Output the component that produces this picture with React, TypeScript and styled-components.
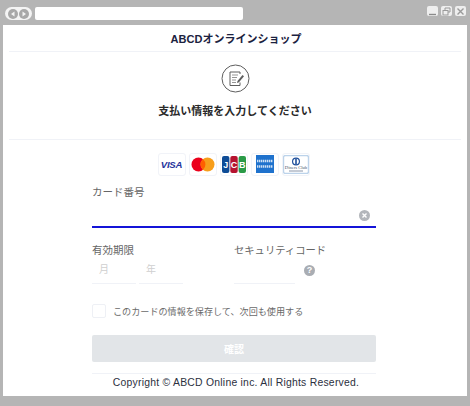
import React from "react";
import styled, { createGlobalStyle } from "styled-components";

const Global = createGlobalStyle`
  html, body { margin: 0; padding: 0; background: #b5b5b5; }
  #root { width: 470px; height: 406px; overflow: hidden; }
  * { box-sizing: border-box; }
`;
const Frame = styled.div`
  width: 470px; height: 406px; background: #b5b5b5; display: flex; flex-direction: column;
  font-family: "Noto Sans CJK JP", "Noto Sans", sans-serif;
`;
const TitleBar = styled.div`
  height: 25px; padding: 7px 4px 0 5px; display: flex; align-items: flex-start; gap: 3px;
`;
const NavPill = styled.div`
  width: 27px; height: 13px; border-radius: 7px; background: #f4f4f4; display: flex; align-items: center; justify-content: center; gap: 1px;
`;
const NavDot = styled.span`
  width: 10px; height: 10px; border-radius: 50%; background: #a8a8a8; display: flex; align-items: center; justify-content: center;
`;
const AddressBar = styled.div`
  width: 208px; height: 13px; background: #fff; border-radius: 2px;
`;
const WindowButtons = styled.div`
  margin-left: auto; margin-top: -1px; display: flex; gap: 3px;
`;
const WindowButton = styled.div`
  width: 11px; height: 10px; background: #eeeeee; border-radius: 2px; display: flex; align-items: center; justify-content: center;
`;
const Page = styled.div`
  margin: 0 3px; height: 371px; background: #fff; display: flex; flex-direction: column; padding: 0 6px;
`;
const ShopHeader = styled.div`
  height: 26.5px; border-bottom: 1px solid #f0f2f7; padding-left: 2px; text-align: center; color: #1b2240;
  font-size: 11px; line-height: 29px; font-weight: 700; font-family: "Liberation Sans", "Noto Sans CJK JP", sans-serif;
`;
const Intro = styled.div`
  height: 88px; border-bottom: 1px solid #f0f2f7; display: flex; flex-direction: column; align-items: center; padding-top: 12px;
`;
const Heading = styled.h1`
  margin: 9px 0 0; font-size: 11px; line-height: 16px; font-weight: 700; color: #2a2a2a; letter-spacing: 0;
`;
const Form = styled.div`
  width: 284px; margin-left: 83px; display: flex; flex-direction: column;
`;
const Cards = styled.div`
  margin-top: 13px; height: 24px; display: flex; justify-content: center; gap: 3px; padding-right: 1px;
`;
const Card = styled.div`
  width: 28px; height: 23px; border: 1px solid #f1f3f8; border-radius: 3px; display: flex; align-items: center; justify-content: center; background: #fff;
`;
const Visa = styled.span`
  font: italic 700 9.6px "Liberation Sans", sans-serif; color: #24339b; letter-spacing: -0.2px;
`;
const Label = styled.div<{ $dense?: boolean }>`
  font-size: ${(p) => (p.$dense ? 10.3 : 10.5)}px; line-height: 14px; color: #666666;
`;
const CardLabel = styled(Label)`
  margin-top: 8px;
`;
const NumberField = styled.div`
  height: 29px; border-bottom: 2px solid #1414d8; display: flex; align-items: center; justify-content: flex-end; padding: 6px 6px 0 0;
`;
const ExpiryRow = styled.div`
  margin-top: 15px; display: flex;
`;
const ExpiryGroup = styled.div`
  width: 142px; display: flex; flex-direction: column;
`;
const SecurityGroup = styled.div`
  display: flex; flex-direction: column; width: 142px;
`;
const Inputs = styled.div`
  display: flex; gap: 3px;
`;
const ShortInput = styled.div<{ $w: number }>`
  width: ${(p) => p.$w}px; height: 27px; border-bottom: 1px solid #f0f2f7; padding: 5px 0 0 7px;
  font-size: 10px; line-height: 14px; color: #cfcfcf;
`;
const SecurityLine = styled.div`
  display: flex; align-items: center;
`;
const Help = styled.div`
  margin: 0 0 0 9px; width: 11px; height: 11px; border-radius: 50%; background: #a9adb3; color: #fff;
  font: 700 9px/11px "Liberation Sans", sans-serif; text-align: center;
`;
const SaveRow = styled.label`
  margin-top: 20px; display: flex; align-items: center; gap: 7px; font-size: 9.1px; line-height: 14px; color: #6a6a6a; white-space: nowrap;
`;
const Check = styled.span`
  width: 14px; height: 14px; border: 1px solid #eef0f5; border-radius: 2px; display: block;
`;
const Confirm = styled.div`
  margin-top: 17px; height: 27px; background: #e2e5e8; border-radius: 2px; color: #fff;
  font-size: 10px; font-weight: 700; line-height: 27px; text-align: center;
`;
const Footer = styled.div`
  margin-top: 11px; height: 22px; border-top: 1px solid #f0f2f7; padding-left: 4px; text-align: center; white-space: nowrap;
  font: 10.4px/18px "Liberation Sans", sans-serif; color: #2b3040; letter-spacing: 0.24px;
`;

const Arrow = ({ left }: { left?: boolean }) => (
  <svg width="6" height="6" viewBox="0 0 6 6"><path d={left ? "M4.5 .5 1 3l3.5 2.5z" : "M1.5 .5 5 3 1.5 5.5z"} fill="#f4f4f4" /></svg>
);

const PageIcon = () => (
  <svg width="29" height="29" viewBox="0 0 29 29" fill="none" stroke="#5e5e5e">
    <circle cx="14.5" cy="14.5" r="13.5" strokeWidth="1" />
    <path d="M19 10V8H9v13.5h10v-3" strokeWidth="1" />
    <path d="M11 11h6M11 13.5h5M11 16h4M11 18.5h4" strokeWidth=".9" stroke="#8a8a8a" />
    <path d="M16.5 17l5-6 1.5 1.2-5 6-2 .8z" fill="#5e5e5e" stroke="none" />
  </svg>
);

const MasterLogo = () => (
  <svg width="24" height="15" viewBox="0 0 24 15"><circle cx="7.5" cy="7.5" r="7" fill="#eb001b" /><circle cx="16.5" cy="7.5" r="7" fill="#f79e1b" /><path d="M12 2.2a7 7 0 0 1 0 10.6 7 7 0 0 1 0-10.6z" fill="#ff5f00" /></svg>
);
const JcbLogo = () => (
  <svg width="24" height="17" viewBox="0 0 24 17" fontFamily="Liberation Sans, sans-serif" fontWeight="700" fontSize="9" fill="#fff" textAnchor="middle">
    <rect x="0" y="0" width="7.4" height="17" rx="2" fill="#0e4c96" />
    <rect x="8.3" y="0" width="7.4" height="17" rx="2" fill="#b5122f" />
    <rect x="16.6" y="0" width="7.4" height="17" rx="2" fill="#2a9a47" />
    <text x="3.8" y="12">J</text>
    <text x="12" y="12">C</text>
    <text x="20.3" y="12">B</text>
  </svg>
);
const AmexLogo = () => (
  <svg width="18" height="18" viewBox="0 0 18 18">
    <rect width="18" height="18" fill="#1f72cd" />
    <path d="M1 6h16M1 11.5h16" stroke="#cfe1f5" strokeWidth="2.6" strokeDasharray="1.4 .6" />
  </svg>
);
const DinersLogo = () => (
  <svg width="26" height="19" viewBox="0 0 26 19">
    <rect x=".5" y=".5" width="25" height="18" rx="2" fill="#fff" stroke="#bcd3ea" strokeWidth="1.4" />
    <circle cx="13" cy="6.5" r="4" fill="#1e4f9c" />
    <circle cx="13" cy="6.5" r="2.8" fill="#fff" />
    <rect x="12.2" y="3.6" width="1.6" height="5.8" fill="#1e4f9c" />
    <text x="13" y="14.2" textAnchor="middle" fontFamily="Liberation Serif, serif" fontSize="4.6" fill="#45526b">Diners Club</text>
    <path d="M6 16h14" stroke="#6c7c96" strokeWidth=".8" />
  </svg>
);
const ClearIcon = () => (
  <svg width="11" height="11" viewBox="0 0 11 11"><circle cx="5.5" cy="5.5" r="5.5" fill="#b3b6bb" /><path d="M3.5 3.5l4 4M7.5 3.5l-4 4" stroke="#fff" strokeWidth="1.4" /></svg>
);

export default function App() {
  return (
    <Frame>
      <Global />
      <TitleBar>
        <NavPill>
          <NavDot><Arrow left /></NavDot>
          <NavDot><Arrow /></NavDot>
        </NavPill>
        <AddressBar />
        <WindowButtons>
          <WindowButton><svg width="9" height="9" viewBox="0 0 9 9"><path d="M1 7.5h7" stroke="#8a8a8a" strokeWidth="1.4" /></svg></WindowButton>
          <WindowButton><svg width="9" height="9" viewBox="0 0 9 9" fill="none" stroke="#9a9a9a"><path d="M3 3V1h5v4H6" /><rect x="1" y="3.5" width="5" height="4.5" /></svg></WindowButton>
          <WindowButton><svg width="9" height="9" viewBox="0 0 9 9"><path d="M1.5 1.5l6 6M7.5 1.5l-6 6" stroke="#9a9a9a" strokeWidth="1.4" /></svg></WindowButton>
        </WindowButtons>
      </TitleBar>
      <Page>
        <ShopHeader>ABCDオンラインショップ</ShopHeader>
        <Intro>
          <PageIcon />
          <Heading>支払い情報を入力してください</Heading>
        </Intro>
        <Form>
          <Cards>
            <Card><Visa>VISA</Visa></Card>
            <Card><MasterLogo /></Card>
            <Card><JcbLogo /></Card>
            <Card><AmexLogo /></Card>
            <Card><DinersLogo /></Card>
          </Cards>
          <CardLabel>カード番号</CardLabel>
          <NumberField><ClearIcon /></NumberField>
          <ExpiryRow>
            <ExpiryGroup>
              <Label>有効期限</Label>
              <Inputs>
                <ShortInput $w={44}>月</ShortInput>
                <ShortInput $w={44}>年</ShortInput>
              </Inputs>
            </ExpiryGroup>
            <SecurityGroup>
              <Label $dense>セキュリティコード</Label>
              <SecurityLine>
                <ShortInput $w={61} />
                <Help>?</Help>
              </SecurityLine>
            </SecurityGroup>
          </ExpiryRow>
          <SaveRow><Check />このカードの情報を保存して、次回も使用する</SaveRow>
          <Confirm>確認</Confirm>
          <Footer>Copyright © ABCD Online inc. All Rights Reserved.</Footer>
        </Form>
      </Page>
    </Frame>
  );
}
